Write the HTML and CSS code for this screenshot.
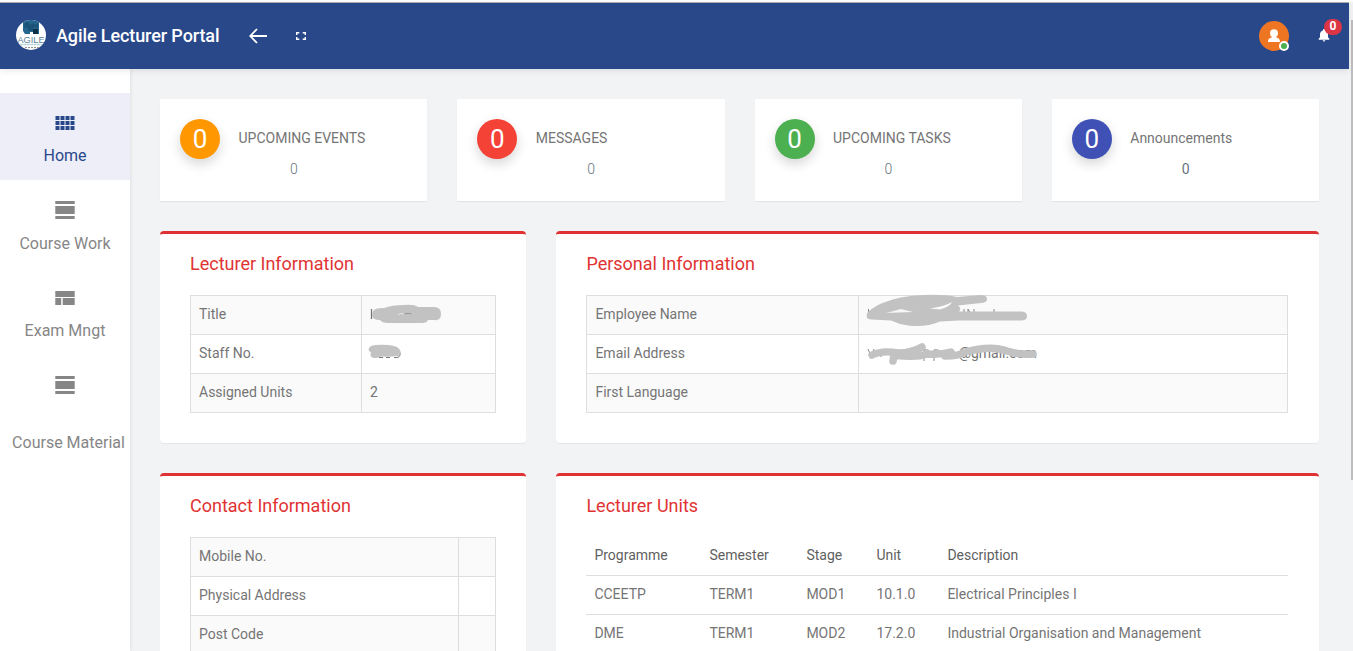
FILE: index.html
```html
<!DOCTYPE html>
<html lang="en">
<head>
<meta charset="utf-8">
<title>Agile Lecturer Portal</title>
<link rel="stylesheet" href="styles.css">
</head>
<body>
<div class="page">
  <header class="topbar">
    <svg class="logo" width="30" height="30" viewBox="0 0 30 30">
      <defs><clipPath id="disc"><circle cx="15" cy="15" r="15"/></clipPath></defs>
      <g clip-path="url(#disc)">
        <rect width="30" height="30" fill="#fff"/>
        <path d="M7 0h16v14h-6V12h-3v2H9l-2-3z" fill="#23658c"/>
        <path d="M9 3l3-1 2 3 3-2 2 2 3-2v5l-4-1-2 4h-3l-2-4-3 1z" fill="#1b5278"/>
        <path d="M17 9h5v5h-5z" fill="#0e3049"/>
        <text x="15" y="22.8" text-anchor="middle" class="logo-text" textLength="27" lengthAdjust="spacingAndGlyphs">AGILE</text>
        <path d="M4 24.5h22" stroke="#b4d3dc" stroke-width="1.4" stroke-dasharray="3 .4"/>
        <path d="M9 27.6h14" stroke="#888" stroke-width="1" stroke-dasharray="2 1"/>
      </g>
    </svg>
    <span class="brand">Agile Lecturer Portal</span>
    <svg class="back" width="18" height="16" viewBox="0 0 18 16"><path d="M18 8H1.500M8 1L1.300 8 8 15" fill="none" stroke="#fff" stroke-width="1.8"/></svg>
    <svg class="expand" width="10" height="8" viewBox="0 0 10 8"><path d="M.7 3V.7h2.600M6.700.7h2.600V3M9.300 5v2.300H6.700M3.300 7.300H.7V5" fill="none" stroke="#fff" stroke-width="1.400"/></svg>
    <div class="user">
      <svg width="30" height="30" viewBox="0 0 30 30">
        <circle cx="15" cy="15" r="15" fill="#ee7623"/>
        <circle cx="15" cy="12.200" r="4" fill="#fff"/>
        <path d="M13 14h4v2.200c2.500.8 4 1.600 4 4.800H9c0-3.200 1.500-4 4-4.800z" fill="#fff"/>
      </svg>
      <span class="status"></span>
    </div>
    <div class="bell">
      <svg width="12" height="13" viewBox="0 0 12 13"><path d="M6 0c.6 0 1 .4 1 1v.4c2 .5 3 2 3 3.800v3l1.300 1.500v1H.7v-1L2 8.200v-3C2 3.400 3 1.900 5 1.400V1c0-.6.4-1 1-1zM4.700 11.200h2.600a1.300 1.300 0 0 1-2.600 0z" fill="#fff"/></svg>
      <span class="count">0</span>
    </div>
  </header>
  <div class="body">
    <nav class="sidebar">
      <a class="item active">
        <svg width="20" height="18" viewBox="0 0 20 18"><path d="M.5 2h4v4h-4zM5.500 2h4v4h-4zM10.500 2h4v4h-4zM15.500 2h4v4h-4zM.5 7h4v4h-4zM5.500 7h4v4h-4zM10.500 7h4v4h-4zM15.500 7h4v4h-4zM.5 12h4v4h-4zM5.500 12h4v4h-4zM10.500 12h4v4h-4zM15.500 12h4v4h-4z" fill="currentColor"/></svg>
        <span>Home</span>
      </a>
      <a class="item second">
        <svg width="20" height="18" viewBox="0 0 20 18"><path d="M.3 0h19.400v3H.3zM.3 5h19.400v8H.3zM.3 15h19.400v3H.3z" fill="currentColor"/></svg>
        <span>Course Work</span>
      </a>
      <a class="item">
        <svg width="20" height="18" viewBox="0 0 20 18"><path d="M.3 2h19.400v6H.3zM.3 9h5.900v7H.3zM7.700 9h12v7h-12z" fill="currentColor"/></svg>
        <span>Exam Mngt</span>
      </a>
      <a class="item tall">
        <svg width="20" height="18" viewBox="0 0 20 18"><path d="M.3 0h19.400v3H.3zM.3 5h19.400v8H.3zM.3 15h19.400v3H.3z" fill="currentColor"/></svg>
        <span>Course Material</span>
      </a>
    </nav>
    <main class="content">
      <section class="stats">
        <div class="stat"><div class="dot orange">0</div><div class="info"><span>UPCOMING EVENTS</span><span class="num">0</span></div></div>
        <div class="stat"><div class="dot red">0</div><div class="info"><span>MESSAGES</span><span class="num">0</span></div></div>
        <div class="stat"><div class="dot green">0</div><div class="info"><span>UPCOMING TASKS</span><span class="num">0</span></div></div>
        <div class="stat"><div class="dot indigo">0</div><div class="info"><span>Announcements</span><span class="num regular">0</span></div></div>
      </section>
      <section class="panels">
        <div class="panel">
          <h2>Lecturer Information</h2>
          <table class="grid lecturer">
            <tr><td>Title</td><td class="masked">
              <svg class="scribble" width="134" height="38" viewBox="362 296 134 38"><path d="M371.500 309v10" stroke="#777" stroke-width="1.300"/><path d="M374 310q2-2 10-2 8-3 20-3 10-1 14 2h16q7 0 7 7t-7 6h-6q-1 3-6 3h-34q-6 0-8-3-8 0-8-5 0-3 2-5z" fill="#c2c2c2"/><path d="M398 314.500q3-1.500 6-.5" stroke="#e4e4e4" fill="none"/><path d="M405 314.500v-1h6v1" stroke="#999" fill="none"/></svg></td></tr>
            <tr><td>Staff No.</td><td class="masked">
              <svg class="scribble" width="134" height="38" viewBox="362 335 134 38"><path d="M379 357.500h4M386 357.500h4M394 357.500q7 1 6-5" stroke="#777" fill="none"/><path d="M371 346q5-2 18-1 9 1 11 5 2 4-2 6-8 1-17 .5-7 3-10 0-1-2 0-4-5-3 0-6.500z" fill="#c2c2c2"/></svg></td></tr>
            <tr><td>Assigned Units</td><td>2</td></tr>
          </table>
        </div>
        <div class="panel">
          <h2>Personal Information</h2>
          <table class="grid personal">
            <tr><td>Employee Name</td><td class="masked">
              <svg class="scribble" width="180" height="38" viewBox="859 296 180 38"><path d="M868.500 309v4M926 309v4M934 309v4M947 309v3M964 309v10M968 319v-10l6 10v-10M981 318.500h8M994 309v10M1000 318.500h6M1009 318.500h6M1017 318.500h7" stroke="#888" fill="none"/><path d="M868 312Q882 299 915 295.500q27-2 42 1.500l24-2q6 0 6 4t-6 4l-23 2.500q4 3 1 6h62q6 0 6 4.500t-6 4.500h-62l-19 1q-14 6-32 4-9-1-17-5l-19-1q-8 0-4-8z" fill="#c2c2c2"/><path d="M886 313l15-4 12 3z" fill="#f6f6f6"/><path d="M930 308.500q14-2 22-6.500-2 5-12 7.500z" fill="#fafafa"/></svg></td></tr>
            <tr><td>Email Address</td><td class="masked"><span class="domain">@gmail.com</span>
              <svg class="scribble" width="180" height="38" viewBox="859 335 180 38"><path d="M868 349l3 7 3-7M877 350v6M881 357v-7q5-2 5 3M924 361v-11q6-1 6 3t-6 4M934 361v-11q6-1 6 3t-6 4" stroke="#888" fill="none"/><path d="M872 355q10-5 26-2 14 0 24-6M893 361l1-6q22 3 33-1 13 1 24-2M945 356q15 0 20-4 26-7 42-1 12 4 26 3" stroke="#c2c2c2" stroke-width="7.500" stroke-linecap="round" stroke-linejoin="round" fill="none"/></svg></td></tr>
            <tr><td>First Language</td><td></td></tr>
          </table>
        </div>
        <div class="panel">
          <h2>Contact Information</h2>
          <table class="grid contact">
            <tr><td>Mobile No.</td><td></td></tr>
            <tr><td>Physical Address</td><td></td></tr>
            <tr><td>Post Code</td><td></td></tr>
          </table>
        </div>
        <div class="panel">
          <h2>Lecturer Units</h2>
          <table class="units">
            <tr><th class="programme">Programme</th><th class="semester">Semester</th><th class="stage">Stage</th><th class="unit">Unit</th><th>Description</th></tr>
            <tr><td>CCEETP</td><td>TERM1</td><td>MOD1</td><td>10.1.0</td><td>Electrical Principles I</td></tr>
            <tr><td>DME</td><td>TERM1</td><td>MOD2</td><td>17.2.0</td><td>Industrial Organisation and Management</td></tr>
          </table>
        </div>
      </section>
    </main>
  </div>
  <div class="scrollthumb"></div>
</div>
</body>
</html>
```
FILE: styles.css
```css
* { box-sizing: border-box; }
body { margin: 0; font-family: Roboto, sans-serif; font-size: 14px; color: #757575; background: #f2f3f5; }
.page { position: relative; height: 651px; overflow: hidden; border-top: 2px solid #fdfdfd; display: flex; flex-direction: column; }
.topbar { position: relative; z-index: 2; flex: none; display: flex; align-items: center; width: 1349px; height: 67px; padding: 0 11px 0 16px; background: #29488a; border-top: 1px solid #aaa; color: #fff; box-shadow: 0 2px 6px rgba(0,0,0,.09); }
.logo { margin-top: -3px; }
.logo-text { font: 9.5px "Liberation Sans", sans-serif; fill: #5b8298; }
.brand { margin: -1px 0 0 10px; font-size: 18px; font-weight: 500; letter-spacing: -.1px; width: 163px; white-space: nowrap; }
.back { margin-left: 30px; }
.expand { margin-left: 29px; }
.user { position: relative; height: 30px; margin-left: auto; }
.status { position: absolute; right: 0; bottom: 0; width: 10px; height: 10px; border: 2px solid #fff; border-radius: 50%; background: #4caf50; }
.bell { position: relative; height: 13px; width: 20px; margin: -2px 0 0 29px; }
.bell svg { display: block; }
.count { position: absolute; left: 6px; top: -10px; width: 18px; height: 16px; border-radius: 8px; background: #dc3545; font-size: 12px; font-weight: 700; line-height: 15px; text-align: center; }
.body { flex: 1; display: flex; min-height: 0; }
.sidebar { width: 130px; flex: none; padding-top: 24px; background: #fff; box-shadow: 1px 0 3px rgba(0,0,0,.08); font-size: 16px; color: #868686; }
.item { display: flex; flex-direction: column; align-items: center; height: 87px; padding-top: 21px; }
.item span { margin-top: 14px; line-height: 19px; white-space: nowrap; }
.second { height: 88px; }
.second span { margin-top: 15px; }
.active { background: #eeeef8; color: #29488a; }
.tall { height: 140px; }
.tall span { margin: 39px -7px 0 0; }
.content { width: 1219px; padding: 30px; }
.stats { display: grid; grid-template-columns: repeat(4, 1fr); gap: 30px; }
.stat { display: flex; height: 102px; padding: 20px; background: #fff; box-shadow: 0 1px 1px rgba(0,0,0,.06); }
.dot { flex: none; width: 40px; height: 40px; border-radius: 50%; color: #fff; font-size: 26px; line-height: 40px; text-align: center; box-shadow: 0 5px 12px rgba(0,0,0,.16); }
.orange { background: #ff9800; }
.red { background: #f44336; }
.green { background: #4caf50; }
.indigo { background: #3f51b5; }
.info { display: flex; flex-direction: column; width: 148px; padding: 11px 0 0 18.5px; line-height: 17px; white-space: nowrap; }
.num { margin: 14px 0 0 51.400px; font-weight: 300; color: #657380; }
.regular { font-weight: 400; }
.panels { display: grid; grid-template-columns: 366px 763px; grid-template-rows: 212px 300px; gap: 30px; margin-top: 30px; }
.panel { padding: 19px 31px 0 30px; background: #fff; border-top: 3px solid #df3333; border-radius: 4px; box-shadow: 0 1px 1px rgba(0,0,0,.06); }
h2 { margin: 0 0 21px; font-size: 18px; line-height: 21px; font-weight: 400; color: #df3333; }
.panel:nth-child(odd) { padding-right: 30px; }
.panel:nth-child(even) h2 { padding-left: .4px; }
table { width: 100%; border-collapse: collapse; table-layout: fixed; }
td, th { height: 39px; padding: 0 8px 2px; text-align: left; white-space: nowrap; }
.grid td { border: 1px solid #dedede; }
.grid tr:nth-child(odd) { background: #fafafa; }
.lecturer td:first-child { width: 171px; }
.personal td:first-child { width: 272px; }
.personal td, .units td, .units th { padding-left: 8.400px; }
.contact td:first-child { width: 268px; }
.masked { position: relative; }
.scribble { position: absolute; left: 0; top: 0; overflow: visible; }
.domain { padding-left: 91px; }
.units { margin-top: -1px; }
.units th { padding-bottom: 0; font-weight: 400; color: #5f5f5f; }
.units td { border-top: 1px solid #dedede; }
.programme { width: 115px; }
.semester { width: 97px; }
.stage { width: 70px; }
.unit { width: 71px; }
.scrollthumb { position: absolute; right: 0; top: 18px; width: 2px; height: 460px; background: #bdbdbd; }
```
